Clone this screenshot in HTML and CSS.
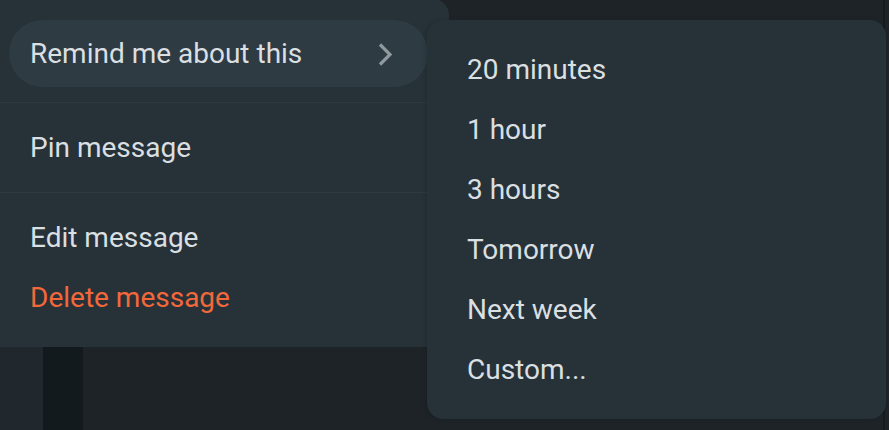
FILE: index.html
```html
<!DOCTYPE html>
<html>
<head>
<meta charset="utf-8">
<link rel="stylesheet" href="styles.css">
</head>
<body>
<div class="page">
  <div class="rail"></div>
  <div class="edge"></div>
  <div class="menu">
    <div class="section first">
      <div class="item active">
        <span>Remind me about this</span>
        <svg class="chev" width="18" height="24" viewBox="0 0 18 24"><path d="M3 2.5 L13 12.5 L3 22.5" fill="none" stroke="#8f999e" stroke-width="3.2"/></svg>
      </div>
    </div>
    <div class="section second">
      <div class="item">Pin message</div>
    </div>
    <div class="section third">
      <div class="item">Edit message</div>
      <div class="item danger">Delete message</div>
    </div>
  </div>
  <div class="submenu">
    <div class="sub-item">20 minutes</div>
    <div class="sub-item">1 hour</div>
    <div class="sub-item">3 hours</div>
    <div class="sub-item">Tomorrow</div>
    <div class="sub-item">Next week</div>
    <div class="sub-item">Custom...</div>
  </div>
</div>
</body>
</html>
```
FILE: styles.css
```css
html, body {
  margin: 0;
  padding: 0;
}
body {
  background: #1d2327;
  font-family: Roboto, "Noto Sans", sans-serif;
  overflow: hidden;
}
.page {
  position: relative;
  width: 889px;
  height: 430px;
  background: #1d2327;
}
.rail {
  position: absolute;
  left: 0;
  top: 0;
  width: 43px;
  height: 430px;
  background: #20282d;
}
.rail::after {
  content: "";
  position: absolute;
  left: 43px;
  top: 0;
  width: 40px;
  height: 430px;
  background: #121a1d;
}
.edge {
  position: absolute;
  left: 883px;
  top: 0;
  width: 2px;
  height: 430px;
  background: #161b1e;
}
.menu {
  position: absolute;
  left: -16px;
  top: -1px;
  width: 465px;
  height: 348px;
  background: #263238;
  border-radius: 16px;
  box-sizing: border-box;
  padding-left: 16px;
  display: flex;
  flex-direction: column;
}
.section {
  border-bottom: 1px solid #2d3a40;
}
.section.first {
  padding: 21px 0 15px 9px;
}
.section.second {
  padding: 14px 0 15px 0;
}
.section.third {
  border-bottom: none;
  padding: 14px 0 0 0;
}
.item {
  height: 60px;
  display: flex;
  align-items: center;
  padding-left: 30px;
  font-size: 28px;
  color: #dadfe2;
}
.item.active {
  height: 67px;
  width: 419px;
  box-sizing: border-box;
  padding-left: 21px;
  padding-right: 33px;
  border-radius: 34px;
  background: #2e3b42;
  justify-content: space-between;
}
.chev {
  display: block;
}
.item.danger {
  color: #f2683b;
}
.submenu {
  position: absolute;
  left: 427px;
  top: 20px;
  width: 459px;
  height: 399px;
  box-sizing: border-box;
  padding: 19px 0 20px 40px;
  background: #263238;
  border-radius: 16px;
  box-shadow: -2px 0 4px rgba(0, 0, 0, 0.12);
}
.sub-item {
  height: 60px;
  display: flex;
  align-items: center;
  font-size: 28px;
  color: #dadfe2;
}
```
